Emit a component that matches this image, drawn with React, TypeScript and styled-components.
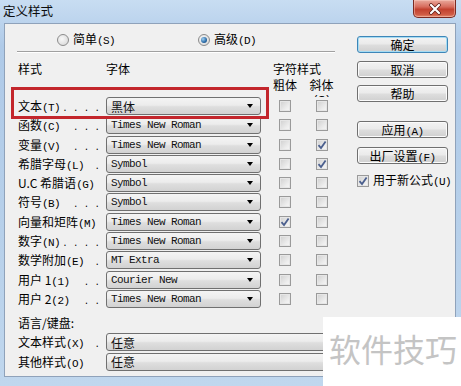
import { Fragment } from 'react';
import styled, { createGlobalStyle } from 'styled-components';

const GlobalStyle = createGlobalStyle`
  html, body {
    margin: 0;
    padding: 0;
  }
  body {
    width: 461px;
    height: 386px;
    overflow: hidden;
    font-family: "Noto Sans CJK SC", sans-serif;
    font-size: 12px;
    color: #000;
  }
`;

const CJK = '"Noto Sans CJK SC", "Noto Sans", sans-serif';
const MONO = '"Liberation Mono", "Noto Sans CJK SC", monospace';
const COLS = '88px 155px 48px 25px';

const Window = styled.div`
  position: relative;
  width: 461px;
  height: 386px;
  overflow: hidden;
  display: flex;
  flex-direction: column;
  background: linear-gradient(#c8ddf2, #afcae8 12%, #b7d0ea 60%, #c0d7ee);
`;

const TitleBar = styled.div`
  height: 23px;
  flex-shrink: 0;
  display: flex;
  justify-content: space-between;
  align-items: flex-start;
  padding: 0 5px 0 3px;
`;

const Title = styled.div`
  font-family: ${CJK};
  font-size: 12.5px;
  line-height: 21px;
  color: #0c0c0c;
`;

const CloseButton = styled.div`
  width: 43px;
  height: 18px;
  box-sizing: border-box;
  border: 1px solid #7a2a22;
  border-top: none;
  border-radius: 0 0 5px 5px;
  background: linear-gradient(#e9a99c, #d76c5d 40%, #c2412f 55%, #cf5b45 85%, #e48a6e);
  box-shadow: inset 0 0 0 1px rgba(255, 210, 200, 0.45);
  display: flex;
  align-items: center;
  justify-content: center;
`;

const Client = styled.div`
  flex: 1;
  margin: 0 5px 9px 4px;
  border: 1px solid #8fa2ba;
  background: #f0f0f0;
  display: flex;
  flex-direction: column;
`;

const TopArea = styled.div`
  display: flex;
`;

const LeftPanel = styled.div`
  width: 340px;
  display: flex;
  flex-direction: column;
`;

const RightPanel = styled.div`
  display: flex;
  flex-direction: column;
  padding: 12px 0 0 12px;
  width: 91px;
`;

const RadioRow = styled.div`
  margin-left: 12px;
  width: 318px;
  height: 28px;
  box-sizing: border-box;
  padding: 5px 0 0 40px;
  border-bottom: 1px solid #a0a0a0;
  box-shadow: 0 1px 0 #fff;
  display: grid;
  grid-template-columns: 141px auto;
  align-items: center;
`;

const RadioOption = styled.label`
  display: flex;
  align-items: center;
  gap: 4px;
  font-family: ${CJK};
  font-size: 12px;
`;

const Text = styled.span`
  line-height: 14px;
  white-space: nowrap;
`;

const RadioDot = styled.span<{ $on?: boolean }>`
  width: 12px;
  height: 12px;
  box-sizing: border-box;
  border-radius: 50%;
  border: 1px solid #8c8c8c;
  background: radial-gradient(circle at 40% 40%, #f8f8f8, #d4d4d4);
  display: flex;
  align-items: center;
  justify-content: center;
  &::after {
    content: '';
    display: ${p => (p.$on ? 'block' : 'none')};
    width: 6px;
    height: 6px;
    border-radius: 50%;
    background: radial-gradient(circle at 35% 35%, #9fd0f2, #2a6aa6 60%, #17456f);
  }
`;

const Key = styled.span`
  font-family: ${MONO};
  font-size: 11px;
  letter-spacing: -0.6px;
`;

const HeaderGrid = styled.div`
  display: grid;
  grid-template-columns: ${COLS};
  margin: 9px 0 0 13px;
  height: 16px;
  line-height: 16px;
  font-family: ${CJK};
  font-size: 12px;
`;

const HeaderCell = styled.div<{ $span?: number; $pad?: number }>`
  grid-column: span ${p => p.$span ?? 1};
  padding-left: ${p => p.$pad ?? 0}px;
  white-space: nowrap;
`;

const SubHeaderGrid = styled.div`
  display: grid;
  grid-template-columns: ${COLS};
  margin: 1px 0 0 13px;
  height: 19px;
  font-family: ${CJK};
  font-size: 12px;
  line-height: 12px;
`;

const SubHeaderCell = styled.div`
  text-align: center;
  padding-top: 1px;
  white-space: nowrap;
`;

const PeekLine = styled.div`
  height: 6px;
  overflow: hidden;
  line-height: 13px;
`;

const TableGrid = styled.div`
  display: grid;
  grid-template-columns: ${COLS};
  grid-auto-rows: 18px;
  row-gap: 1.3px;
  margin: 0 0 0 13px;
`;

const LabelCell = styled.div`
  display: flex;
  align-items: baseline;
  line-height: 18px;
  font-family: ${CJK};
  font-size: 12px;
  white-space: nowrap;
`;

const Dots = styled.span`
  flex: 1;
  text-align: right;
  padding-right: 6px;
  font-family: ${MONO};
  font-size: 9px;
`;

const Select = styled.div<{ $cjk?: boolean }>`
  display: flex;
  align-items: center;
  box-sizing: border-box;
  height: 18px;
  padding-left: 4px;
  border: 1px solid #707070;
  border-radius: 3px;
  background: linear-gradient(#f4f4f4, #ececec 45%, #dedede 55%, #d2d2d2);
  font-family: ${p => (p.$cjk ? CJK : MONO)};
  font-size: ${p => (p.$cjk ? '12px' : '11px')};
  letter-spacing: ${p => (p.$cjk ? '0' : '-0.6px')};
  color: #111;
  white-space: nowrap;
  overflow: hidden;
`;

const Arrow = styled.span`
  margin-left: auto;
  margin-right: 7px;
  width: 0;
  height: 0;
  border-left: 3.5px solid transparent;
  border-right: 3.5px solid transparent;
  border-top: 4px solid #000;
`;

const CheckCell = styled.div`
  display: flex;
  align-items: center;
  justify-content: center;
`;

const Box = styled.span`
  width: 12px;
  height: 12px;
  box-sizing: border-box;
  border: 1px solid #9a9a9a;
  background: linear-gradient(135deg, #cfcfcf, #eeeeee 70%, #f6f6f6);
  box-shadow: inset 0 0 0 1px #e6e6e6;
  display: flex;
  align-items: center;
  justify-content: center;
  flex-shrink: 0;
`;

const Button = styled.div<{ $primary?: boolean; $gap?: number }>`
  margin-top: ${p => p.$gap ?? 0}px;
  height: 17px;
  box-sizing: border-box;
  border: 1px solid ${p => (p.$primary ? '#3d86b8' : '#707070')};
  border-radius: 3px;
  background: linear-gradient(#f3f3f3, #ebebeb 45%, #dddddd 55%, #d0d0d0);
  box-shadow: ${p => (p.$primary ? 'inset 0 0 0 1px #a6dcf3' : 'inset 0 0 0 1px #fbfbfb')};
  text-align: center;
  line-height: 15px;
  font-family: ${CJK};
  font-size: 12px;
  white-space: nowrap;
`;

const CheckOption = styled.label`
  margin-top: 9px;
  display: flex;
  align-items: center;
  gap: 4px;
  font-family: ${CJK};
  font-size: 12px;
  white-space: nowrap;
`;

const BottomSection = styled.div`
  padding: 8px 0 0 13px;
`;

const SectionTitle = styled.div`
  height: 14px;
  line-height: 14px;
  font-family: ${CJK};
  font-size: 12px;
`;

const BottomGrid = styled.div`
  display: grid;
  grid-template-columns: 88px 341px;
  grid-auto-rows: 18px;
  row-gap: 1.3px;
  margin-top: 3.5px;
`;

const Highlight = styled.div`
  position: absolute;
  left: 11px;
  top: 87px;
  width: 258px;
  height: 32px;
  box-sizing: border-box;
  border: 3px solid #c3262c;
`;

const Watermark = styled.div`
  position: absolute;
  left: 323px;
  top: 317px;
  right: 0;
  bottom: 0;
  background: #fff;
  display: flex;
  align-items: center;
  padding: 0 0 8px 6px;
  font-family: ${CJK};
  font-size: 32px;
  color: #c4c4c4;
  white-space: nowrap;
`;

const CheckMark = () => (
  <svg width="10" height="10" viewBox="0 0 10 10">
    <path d="M1.5 5.2 L4 8 L8.6 1.4" fill="none" stroke="#4b5f8e" strokeWidth="1.8" />
  </svg>
);

const Check = ({ on }: { on?: boolean }) => <Box>{on && <CheckMark />}</Box>;

const Label = ({ name, k, dots }: { name: string; k: string; dots: number }) => (
  <LabelCell>
    {name}
    <Key>({k})</Key>
    <Dots>{Array(dots).fill('.').join(' ')}</Dots>
  </LabelCell>
);

const rows = [
  { name: '文本', k: 'T', dots: 4, font: '黑体', cjk: true },
  { name: '函数', k: 'C', dots: 3, font: 'Times New Roman' },
  { name: '变量', k: 'V', dots: 3, font: 'Times New Roman', italic: true },
  { name: '希腊字母 ', k: 'L', dots: 1, font: 'Symbol', italic: true },
  { name: 'U.C 希腊语', k: 'G', dots: 0, font: 'Symbol' },
  { name: '符号', k: 'B', dots: 3, font: 'Symbol' },
  { name: '向量和矩阵', k: 'M', dots: 0, font: 'Times New Roman', bold: true },
  { name: '数字', k: 'N', dots: 4, font: 'Times New Roman' },
  { name: '数学附加', k: 'E', dots: 1, font: 'MT Extra' },
  { name: '用户 1', k: '1', dots: 2, font: 'Courier New' },
  { name: '用户 2', k: '2', dots: 2, font: 'Times New Roman' },
];

export default function App() {
  return (
    <>
      <GlobalStyle />
      <Window>
        <TitleBar>
          <Title>定义样式</Title>
          <CloseButton>
            <svg width="14" height="12" viewBox="0 0 14 12">
              <path d="M3 2 L11 10 M11 2 L3 10" stroke="#5a1a14" strokeWidth="3.6" strokeLinecap="round" />
              <path d="M3 2 L11 10 M11 2 L3 10" stroke="#fff" strokeWidth="2.2" strokeLinecap="round" />
            </svg>
          </CloseButton>
        </TitleBar>
        <Client>
          <TopArea>
            <LeftPanel>
              <RadioRow>
                <RadioOption>
                  <RadioDot />
                  <Text>简单<Key>(S)</Key></Text>
                </RadioOption>
                <RadioOption>
                  <RadioDot $on />
                  <Text>高级<Key>(D)</Key></Text>
                </RadioOption>
              </RadioRow>
              <HeaderGrid>
                <HeaderCell>样式</HeaderCell>
                <HeaderCell>字体</HeaderCell>
                <HeaderCell $span={2} $pad={12}>字符样式</HeaderCell>
              </HeaderGrid>
              <SubHeaderGrid>
                <div />
                <div />
                <SubHeaderCell>粗体</SubHeaderCell>
                <SubHeaderCell>
                  斜体
                  <PeekLine>
                    <Key>(I)</Key>
                  </PeekLine>
                </SubHeaderCell>
              </SubHeaderGrid>
              <TableGrid>
                {rows.map(r => (
                  <Fragment key={r.k}>
                    <Label name={r.name} k={r.k} dots={r.dots} />
                    <Select $cjk={r.cjk}>
                      {r.font}
                      <Arrow />
                    </Select>
                    <CheckCell>
                      <Check on={r.bold} />
                    </CheckCell>
                    <CheckCell>
                      <Check on={r.italic} />
                    </CheckCell>
                  </Fragment>
                ))}
              </TableGrid>
            </LeftPanel>
            <RightPanel>
              <Button $primary>确定</Button>
              <Button $gap={8}>取消</Button>
              <Button $gap={7}>帮助</Button>
              <Button $gap={19}>应用<Key>(A)</Key></Button>
              <Button $gap={9}>出厂设置<Key>(F)</Key></Button>
              <CheckOption>
                <Check on />
                <Text>用于新公式<Key>(U)</Key></Text>
              </CheckOption>
            </RightPanel>
          </TopArea>
          <BottomSection>
            <SectionTitle>语言/键盘:</SectionTitle>
            <BottomGrid>
              <Label name="文本样式" k="X" dots={1} />
              <Select $cjk>
                任意
                <Arrow />
              </Select>
              <Label name="其他样式" k="O" dots={0} />
              <Select $cjk>
                任意
                <Arrow />
              </Select>
            </BottomGrid>
          </BottomSection>
        </Client>
        <Highlight />
        <Watermark>软件技巧</Watermark>
      </Window>
    </>
  );
}
